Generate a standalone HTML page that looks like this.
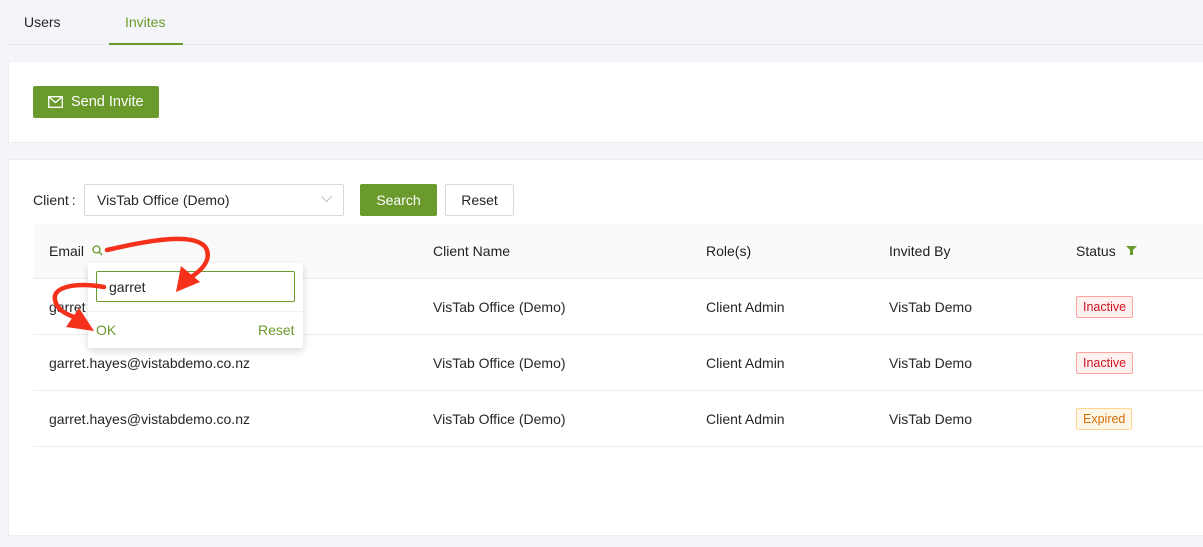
<!DOCTYPE html>
<html><head><style>
body{margin:0;width:1203px;height:547px;background:#f4f5f8;font-family:"Liberation Sans",sans-serif;font-size:14px;color:#262626;position:relative;overflow:hidden}
.a{position:absolute}
.card{background:#fff;border:1px solid #eceef1}
.cell{position:absolute;font-size:14px}
.tag{position:absolute;font-size:12.5px;padding:0 6px;height:20px;line-height:20px;border-radius:2px}
.in{color:#cf1322;background:#fff1f0;border:1px solid #ffa39e}
.ex{color:#d46b08;background:#fff7e6;border:1px solid #ffd591}
</style></head><body>
<div class="a" style="left:24px;top:14px">Users</div>
<div class="a" style="left:125px;top:14px;color:#6a9a2c">Invites</div>
<div class="a" style="left:8px;top:44px;width:1195px;height:1px;background:#e6e8eb"></div>
<div class="a" style="left:109px;top:43px;width:74px;height:2px;background:#6a9a2c"></div>

<div class="a card" style="left:8px;top:61px;width:1200px;height:80px"></div>
<div class="a" style="left:33px;top:86px;width:126px;height:32px;background:#6a9a2c;border-radius:2px;color:#fff;line-height:32px">
<svg class="a" style="left:15px;top:10px" width="15" height="12" viewBox="0 0 15 12"><rect x="0.7" y="0.7" width="13.6" height="10.6" fill="none" stroke="#fff" stroke-width="1.3"/><path d="M1 1l6.5 5.5L14 1" fill="none" stroke="#fff" stroke-width="1.3"/></svg>
<span class="a" style="left:38px;font-size:14.5px">Send Invite</span></div>

<div class="a card" style="left:8px;top:159px;width:1200px;height:375px"></div>
<div class="a" style="left:33px;top:192px">Client<span style="margin-left:3px">:</span></div>
<div class="a" style="left:84px;top:184px;width:258px;height:30px;border:1px solid #d9d9d9;border-radius:2px;background:#fff"><span class="a" style="left:12px;top:7px">VisTab Office (Demo)</span>
<svg class="a" style="left:236px;top:11px" width="11" height="7"><path d="M0.5 0.5l5 5 5-5" fill="none" stroke="#bfbfbf"/></svg></div>
<div class="a" style="left:360px;top:184px;width:77px;height:32px;background:#6a9a2c;border-radius:2px;color:#fff;text-align:center;line-height:32px">Search</div>
<div class="a" style="left:445px;top:184px;width:67px;height:30px;border:1px solid #d9d9d9;border-radius:2px;background:#fff;text-align:center;line-height:30px">Reset</div>

<div class="a" style="left:33px;top:224px;width:1170px;height:54px;background:#fafafa;border-bottom:1px solid #ededed"></div>
<div class="cell" style="left:49px;top:243px;color:#1f1f1f">Email</div>
<svg class="a" style="left:92px;top:245px" width="11" height="11"><circle cx="4.5" cy="4.5" r="3.5" fill="none" stroke="#6a9a2c" stroke-width="1.3"/><path d="M7 7l3 3" stroke="#6a9a2c" stroke-width="1.4"/></svg>
<div class="cell" style="left:433px;top:243px;color:#1f1f1f">Client Name</div>
<div class="cell" style="left:706px;top:243px;color:#1f1f1f">Role(s)</div>
<div class="cell" style="left:889px;top:243px;color:#1f1f1f">Invited By</div>
<div class="cell" style="left:1076px;top:243px;color:#1f1f1f">Status</div>
<svg class="a" style="left:1126px;top:246px" width="11" height="10"><path d="M0 0h11L7 4v5H4V4z" fill="#6a9a2c"/></svg>

<div class="a" style="left:33px;top:334px;width:1170px;height:1px;background:#ededed"></div>
<div class="a" style="left:33px;top:390px;width:1170px;height:1px;background:#ededed"></div>
<div class="a" style="left:33px;top:446px;width:1170px;height:1px;background:#ededed"></div>

<div class="cell" style="left:49px;top:299px">garret</div>
<div class="cell" style="left:49px;top:355px">garret.hayes@vistabdemo.co.nz</div>
<div class="cell" style="left:49px;top:411px">garret.hayes@vistabdemo.co.nz</div>
<div class="cell" style="left:433px;top:299px">VisTab Office (Demo)</div>
<div class="cell" style="left:433px;top:355px">VisTab Office (Demo)</div>
<div class="cell" style="left:433px;top:411px">VisTab Office (Demo)</div>
<div class="cell" style="left:706px;top:299px">Client Admin</div>
<div class="cell" style="left:706px;top:355px">Client Admin</div>
<div class="cell" style="left:706px;top:411px">Client Admin</div>
<div class="cell" style="left:889px;top:299px">VisTab Demo</div>
<div class="cell" style="left:889px;top:355px">VisTab Demo</div>
<div class="cell" style="left:889px;top:411px">VisTab Demo</div>
<div class="tag in" style="left:1076px;top:296px">Inactive</div>
<div class="tag in" style="left:1076px;top:352px">Inactive</div>
<div class="tag ex" style="left:1076px;top:408px">Expired</div>

<div class="a" style="left:88px;top:263px;width:215px;height:85px;background:#fff;box-shadow:0 3px 8px rgba(0,0,0,.15);border-radius:2px">
<div class="a" style="left:8px;top:8px;width:197px;height:29px;border:1px solid #6a9a2c;border-radius:2px"><span class="a" style="left:12px;top:7px">garret</span></div>
<div class="a" style="left:0;top:48px;width:215px;height:1px;background:#f0f0f0"></div>
<div class="a" style="left:8px;top:59px;color:#6a9a2c">OK</div>
<div class="a" style="left:170px;top:59px;color:#6a9a2c">Reset</div>
</div>

<svg class="a" style="left:0;top:0" width="1203" height="547">
<path d="M107 250 C150 240 195 232 206 248 C212 260 202 270 190 278" fill="none" stroke="#f5311c" stroke-width="4.5" stroke-linecap="round"/>
<path d="M176 292 L181 266 L200 282 Z" fill="#f5311c"/>
<path d="M104 287 C75 282 52 287 55 300 C57 310 66 314 74 317" fill="none" stroke="#f5311c" stroke-width="4.5" stroke-linecap="round"/>
<path d="M94 331 L66 327 L79 308 Z" fill="#f5311c"/>
</svg>
</body></html>
